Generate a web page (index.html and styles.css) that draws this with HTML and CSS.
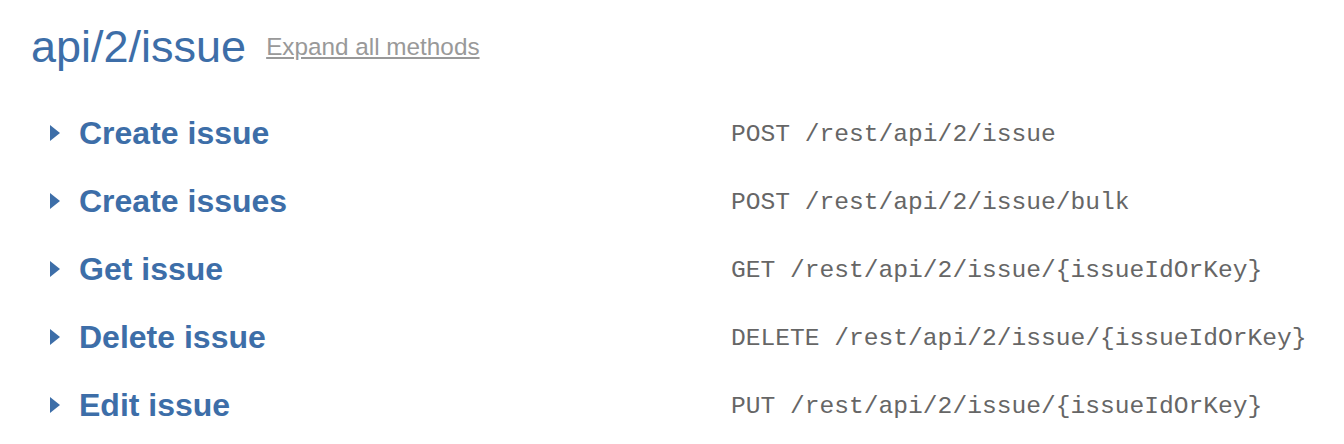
FILE: index.html
```html
<!DOCTYPE html>
<html>
<head>
	<meta charset="utf-8">
	<title>api/2/issue</title>
	<link rel="stylesheet" href="styles.css">
</head>
<body>
	<div class="resource">
		<div class="resource-head">
			<h1 class="resource-name">api/2/issue</h1>
			<a href="javascript:;" class="expand-all">Expand all methods</a>
		</div>
		<ul class="methods">
			<li class="method">
				<span class="method-name"><svg class="caret" width="10" height="16" viewBox="0 0 10 16"><polygon points="0,0 10,8 0,16"/></svg>Create issue</span>
				<code class="method-path">POST /rest/api/2/issue</code>
			</li>
			<li class="method">
				<span class="method-name"><svg class="caret" width="10" height="16" viewBox="0 0 10 16"><polygon points="0,0 10,8 0,16"/></svg>Create issues</span>
				<code class="method-path">POST /rest/api/2/issue/bulk</code>
			</li>
			<li class="method">
				<span class="method-name"><svg class="caret" width="10" height="16" viewBox="0 0 10 16"><polygon points="0,0 10,8 0,16"/></svg>Get issue</span>
				<code class="method-path">GET /rest/api/2/issue/{issueIdOrKey}</code>
			</li>
			<li class="method">
				<span class="method-name"><svg class="caret" width="10" height="16" viewBox="0 0 10 16"><polygon points="0,0 10,8 0,16"/></svg>Delete issue</span>
				<code class="method-path">DELETE /rest/api/2/issue/{issueIdOrKey}</code>
			</li>
			<li class="method">
				<span class="method-name"><svg class="caret" width="10" height="16" viewBox="0 0 10 16"><polygon points="0,0 10,8 0,16"/></svg>Edit issue</span>
				<code class="method-path">PUT /rest/api/2/issue/{issueIdOrKey}</code>
			</li>
		</ul>
	</div>
</body>
</html>
```
FILE: styles.css
```css
* { margin: 0; padding: 0; }
body { background: #fff; font-family: "Liberation Sans", Arial, sans-serif; }

.resource { padding: 22px 0 0 31px; }

.resource-head { display: flex; align-items: baseline; gap: 20px; height: 50px; }
.resource-name { font-size: 45px; font-weight: normal; line-height: 50px; color: #3d6ea8; }
.expand-all { font-size: 24.3px; color: #999; text-decoration: underline; position: relative; top: -7px; }

.methods { list-style: none; margin-top: 27px; padding-left: 19px; }
.method { display: grid; grid-template-columns: 681px 1fr; align-items: baseline; height: 68px; line-height: 68px; }
.method-name { display: flex; align-items: center; font-size: 32px; font-weight: bold; color: #3d6ea8; }
.caret { flex: none; fill: #3d6ea8; margin-right: 19px; }
.method-path { font-family: "Liberation Mono", "Courier New", monospace; font-size: 24.6px; color: #666; }
```
